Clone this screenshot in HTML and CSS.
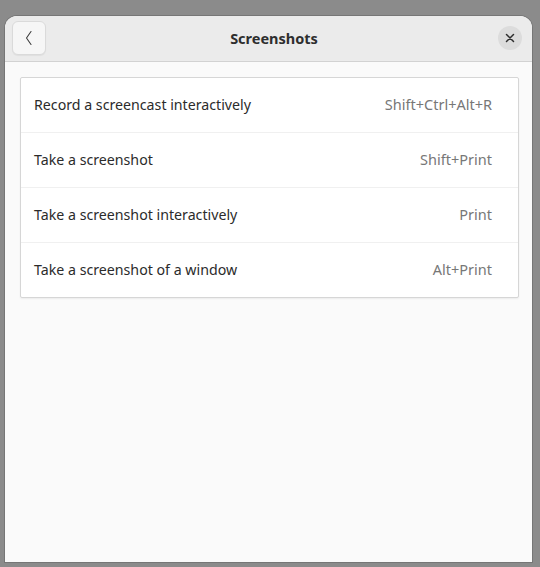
FILE: index.html
```html
<!DOCTYPE html>
<html>
<head>
<meta charset="utf-8">
<link rel="stylesheet" href="styles.css">
</head>
<body>
<div class="desk">
  <div class="dialog">
    <header class="hb">
      <button class="back" aria-label="Back">
        <svg width="16" height="18" viewBox="0 0 16 18"><path d="M10 2.5 L5.5 9 L10 15.5" fill="none" stroke="#3d3d3d" stroke-width="1.1" stroke-linecap="round" stroke-linejoin="round"/></svg>
      </button>
      <div class="title">Screenshots</div>
      <button class="close" aria-label="Close">
        <svg width="10" height="10" viewBox="0 0 10 10"><path d="M1.5 1.5 L8.5 8.5 M8.5 1.5 L1.5 8.5" stroke="#2e2e2e" stroke-width="1.5" stroke-linecap="round"/></svg>
      </button>
    </header>
    <main class="content">
      <div class="list">
        <div class="row"><span class="name">Record a screencast interactively</span><span class="acc">Shift+Ctrl+Alt+R</span></div>
        <div class="row"><span class="name">Take a screenshot</span><span class="acc">Shift+Print</span></div>
        <div class="row"><span class="name">Take a screenshot interactively</span><span class="acc">Print</span></div>
        <div class="row"><span class="name">Take a screenshot of a window</span><span class="acc">Alt+Print</span></div>
      </div>
    </main>
  </div>
</div>
</body>
</html>
```

FILE: styles.css
```css
html, body {
  margin: 0;
  padding: 0;
  background: #8b8b8b;
}
.desk {
  width: 540px;
  height: 567px;
  box-sizing: border-box;
  padding: 16px 8px 5px 5px;
  background: #8b8b8b;
  font-family: "Noto Sans", "Open Sans", sans-serif;
}
.dialog {
  height: 546px;
  background: #fafafa;
  border-radius: 12px 12px 0 0;
  display: flex;
  flex-direction: column;
  overflow: hidden;
  box-shadow: 0 0 0 1px rgba(0,0,0,0.15);
}
.hb {
  height: 46px;
  flex: none;
  box-sizing: border-box;
  background: #ebebeb;
  border-bottom: 1px solid #d2d2d2;
  display: flex;
  align-items: center;
  padding: 0 10px 1px 7px;
}
.back {
  width: 34px;
  height: 34px;
  border: 1px solid #dadada;
  border-radius: 6px;
  background: #f6f6f6;
  display: flex;
  align-items: center;
  justify-content: center;
  padding: 0;
  box-shadow: 0 1px 1px rgba(0,0,0,0.05);
}
.title {
  flex: 1;
  text-align: center;
  font-weight: 700;
  font-size: 14.5px;
  color: #2e2e2e;
  padding-left: 4px;
  padding-bottom: 1px;
}
.close {
  width: 24px;
  height: 24px;
  border-radius: 50%;
  border: none;
  background: #dcdcdc;
  display: flex;
  align-items: center;
  justify-content: center;
  padding: 0;
}
.content {
  flex: 1;
  padding: 15px 13px 0 15px;
}
.list {
  background: #ffffff;
  border: 1px solid #d6d6d6;
  border-radius: 2px;
  box-shadow: 0 1px 2px rgba(0,0,0,0.06);
}
.row {
  height: 55px;
  display: flex;
  align-items: center;
  justify-content: space-between;
  padding: 0 26px 2px 13px;
  border-top: 1px solid #f0f0f0;
  box-sizing: border-box;
  font-size: 14.2px;
}
.row:first-child {
  border-top: none;
  height: 54px;
}
.name {
  color: #2b2b2b;
}
.acc {
  color: #777777;
  font-size: 14.5px;
}
```
